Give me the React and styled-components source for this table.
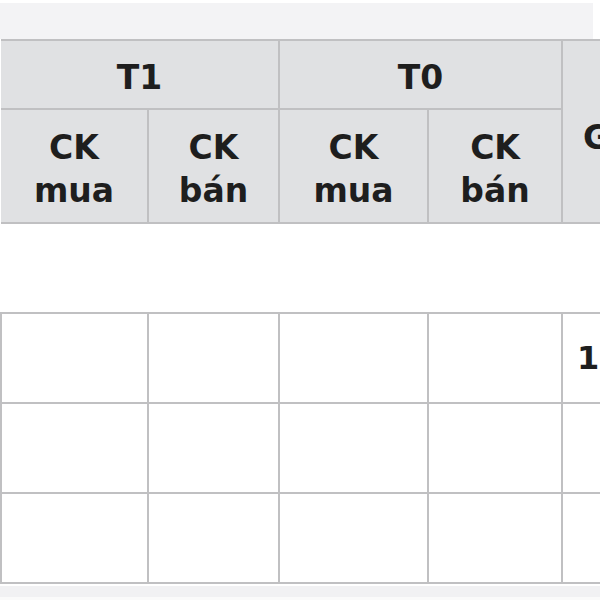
import React from 'react';
import styled, { createGlobalStyle } from 'styled-components';

const GlobalStyle = createGlobalStyle`
  html, body {
    margin: 0;
    padding: 0;
    background: #ffffff;
  }
  body {
    font-family: "DejaVu Sans", Verdana, sans-serif;
  }
`;

const Page = styled.div`
  width: 600px;
  height: 600px;
  overflow: hidden;
  display: flex;
  flex-direction: column;
  background: #ffffff;
`;

const TopBar = styled.div`
  height: 36px;
  margin-top: 3px;
  margin-right: 7px;
  background: #f3f3f5;
  flex-shrink: 0;
`;

const Board = styled.table`
  border-collapse: collapse;
  table-layout: fixed;
  width: 720px;
  flex-shrink: 0;
  color: #1e1e1e;
  font-size: 33px;
  font-weight: bold;
`;

const HeadCell = styled.th`
  background: #e0e1e3;
  border: 2px solid #c0c0c2;
  border-left: ${({ $first }) => ($first ? 'none' : '2px solid #c0c0c2')};
  text-align: ${({ $left }) => ($left ? 'left' : 'center')};
  padding: ${({ $left }) => ($left ? '12px 0 0 20px' : '5px 0 0 0')};
  line-height: 43px;
  height: ${({ $h }) => $h}px;
  box-sizing: border-box;
  vertical-align: middle;
  white-space: nowrap;
`;

const SpacerRow = styled.tr`
  height: 90px;
`;

const SpacerCell = styled.td`
  border: none;
  padding: 0;
`;

const BodyRow = styled.tr`
  height: 90px;
`;

const Cell = styled.td`
  border: 2px solid #c0c0c2;
  padding: 0 0 0 14px;
  font-size: 32px;
  font-weight: bold;
  vertical-align: middle;
  text-align: left;
`;

const BottomBar = styled.div`
  flex: 1;
  margin-top: 2px;
  background: #f1f1f3;
  border-bottom: 3px solid #fafafa;
`;

const rows = [['', '', '', '', '1'], ['', '', '', '', ''], ['', '', '', '', '']];

export default function App() {
  return (
    <Page>
      <GlobalStyle />
      <TopBar />
      <Board>
        <colgroup>
          <col style={{ width: 147 }} />
          <col style={{ width: 131 }} />
          <col style={{ width: 149 }} />
          <col style={{ width: 134 }} />
          <col style={{ width: 159 }} />
        </colgroup>
        <thead>
          <tr>
            <HeadCell colSpan={2} $first $h={69}>T1</HeadCell>
            <HeadCell colSpan={2} $h={69}>T0</HeadCell>
            <HeadCell rowSpan={2} $left>Giá</HeadCell>
          </tr>
          <tr>
            <HeadCell $first $h={114}>CK<br />mua</HeadCell>
            <HeadCell $h={114}>CK<br />bán</HeadCell>
            <HeadCell $h={114}>CK<br />mua</HeadCell>
            <HeadCell $h={114}>CK<br />bán</HeadCell>
          </tr>
        </thead>
        <tbody>
          <SpacerRow>
            <SpacerCell colSpan={5} />
          </SpacerRow>
          {rows.map((r, i) => (
            <BodyRow key={i}>
              {r.map((v, j) => (
                <Cell key={j}>{v}</Cell>
              ))}
            </BodyRow>
          ))}
        </tbody>
      </Board>
      <BottomBar />
    </Page>
  );
}
